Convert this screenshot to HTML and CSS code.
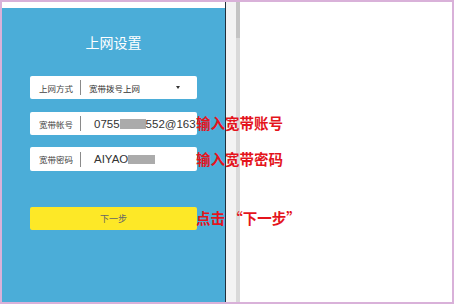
FILE: index.html
```html
<!DOCTYPE html>
<html lang="zh-CN">
<head>
<meta charset="utf-8">
<link rel="stylesheet" href="styles.css">
</head>
<body>
<div class="frame">
  <div class="panel">
    <div class="title">上网设置</div>
    <div class="row row-select">
      <span class="label">上网方式</span>
      <span class="sep"></span>
      <span class="value-sel">宽带拨号上网</span>
      <span class="caret"></span>
    </div>
    <div class="row row-acct">
      <span class="label">宽带帐号</span>
      <span class="sep"></span>
      <span class="value">0755<span class="mask mask-a"></span>552@163</span>
    </div>
    <div class="row row-pwd">
      <span class="label">宽带密码</span>
      <span class="sep"></span>
      <span class="value">AIYAO<span class="mask mask-b"></span></span>
    </div>
    <div class="btn">下一步</div>
  </div>
  <div class="edge"></div>
  <div class="scroll"><div class="track"><div class="thumb"></div></div></div>
  <div class="main"></div>
  <div class="note note-1">输入宽带账号</div>
  <div class="note note-2">输入宽带密码</div>
  <div class="note note-3">点击 “下一步”</div>
</div>
</body>
</html>
```
FILE: styles.css
```css
* { box-sizing: border-box; }
html, body { margin: 0; padding: 0; background: #fff; }
body { font-family: "Noto Sans CJK SC", "Noto Sans", sans-serif; }

.frame {
  position: relative;
  width: 454px;
  height: 304px;
  border: 2px solid #d9b1d9;
  background: #fff;
  display: flex;
  overflow: hidden;
}

.panel {
  width: 223px;
  margin-top: 6px;
  background: #4badd8;
  display: flex;
  flex-direction: column;
  padding: 24px 28px 0;
}

.title {
  height: 20px;
  line-height: 20px;
  text-align: center;
  color: #fff;
  font-size: 14px;
}

.row {
  height: 23px;
  background: #fff;
  border-radius: 2px;
  display: flex;
  align-items: center;
  padding-left: 9px;
  overflow: hidden;
  white-space: nowrap;
}
.row-select { margin-top: 24px; }
.row-acct { margin-top: 13px; }
.row-pwd { margin-top: 12px; height: 24px; }

.label {
  font-size: 8.5px;
  color: #444;
  width: 33px;
  flex: none;
}
.sep {
  width: 1px;
  height: 15px;
  background: #8a8a8a;
  margin-left: 8px;
  flex: none;
}
.value-sel {
  margin-left: 8px;
  font-size: 8.5px;
  color: #333;
  flex: 1;
}
.caret {
  width: 0;
  height: 0;
  border-left: 2.5px solid transparent;
  border-right: 2.5px solid transparent;
  border-top: 3.5px solid #333;
  margin-right: 17px;
}
.value {
  margin-left: 13px;
  font-family: "Liberation Sans", Arial, sans-serif;
  font-size: 11.5px;
  color: #333;
  display: flex;
  align-items: center;
}
.mask {
  display: inline-block;
  background: #ababab;
  flex: none;
}
.mask-a { width: 26px; height: 10px; }
.mask-b { width: 27px; height: 9px; }

.btn {
  margin-top: 36px;
  height: 23px;
  background: #fde827;
  border-radius: 2px;
  color: #666;
  font-size: 9px;
  line-height: 23px;
  text-align: center;
}

.edge { width: 1px; background: #22303c; }
.scroll {
  width: 14px;
  background: #f3f3f3;
  display: flex;
  justify-content: flex-end;
}
.track { width: 4px; background: #d9d9d9; }
.thumb { height: 36px; background: #c4c4c4; }
.main { flex: 1; background: #fff; }

.note {
  position: absolute;
  left: 194px;
  color: #e4141c;
  font-size: 14.5px;
  font-weight: 700;
  line-height: 18px;
  white-space: nowrap;
}
.note-1 { top: 112px; }
.note-2 { top: 148px; }
.note-3 { top: 207px; }
```
